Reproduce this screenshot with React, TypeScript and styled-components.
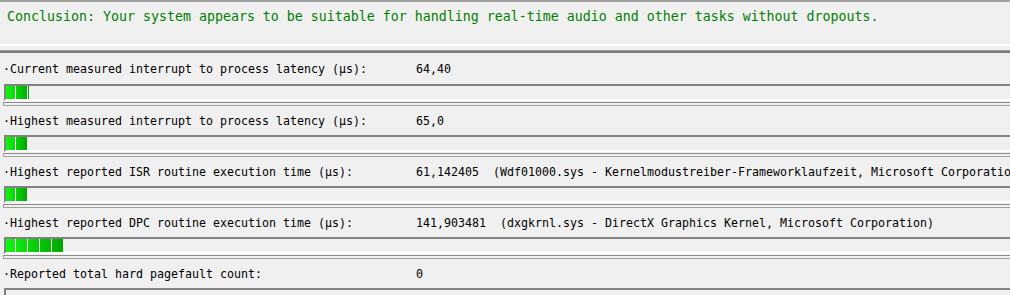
import React from "react";
import styled, { createGlobalStyle } from "styled-components";

const GlobalStyle = createGlobalStyle`
  html, body {
    margin: 0;
    padding: 0;
    background: #f0f0f0;
    overflow: hidden;
  }
  #root {
    width: 1010px;
    height: 295px;
    overflow: hidden;
  }
`;

const Page = styled.div`
  width: 1010px;
  height: 295px;
  overflow: hidden;
  background: #f0f0f0;
  font-family: "DejaVu Sans Mono", "Liberation Mono", monospace;
`;

const Conclusion = styled.div`
  box-sizing: border-box;
  height: 46px;
  border-top: 2px solid #a0a0a0;
  border-bottom: 2px solid #ffffff;
  padding: 7px 7px 0;
  font-size: 13.29px;
  line-height: 16px;
  color: #008000;
  white-space: nowrap;
`;

const Stats = styled.div`
  margin-top: 4px;
`;

const StatsRule = styled.div`
  height: 3px;
  background: linear-gradient(to bottom, #a0a0a0 0 1px, #7c7c7c 1px 3px);
`;

const Item = styled.div`
  display: flex;
  flex-direction: column;
`;

const Separator = styled.div`
  margin: 1px 0 0 3px;
  height: 2px;
  border-top: 1px solid #8c8c8c;
  border-left: 1px solid #a0a0a0;
  border-bottom: 1px solid #a0a0a0;
  background: #f0f0f0;
`;

const Row = styled.div<{ $first?: boolean }>`
  display: flex;
  align-items: center;
  height: ${(p) => (p.$first ? 31 : 29)}px;
  padding-left: 3px;
  font-size: 11.63px;
  color: #000;
  white-space: pre;
`;

const Label = styled.span`
  flex: none;
  width: 413px;
`;

const Value = styled.span`
  flex: none;
`;

const Bar = styled.div`
  box-sizing: border-box;
  margin-left: 4px;
  height: 17px;
  border-top: 2px solid #828282;
  border-left: 2px solid #828282;
  border-bottom: 2px solid #ffffff;
  background: #f0f0f0;
`;

const Fill = styled.div`
  height: 13px;
  background:
    repeating-linear-gradient(
      to right,
      transparent 0 9px,
      #ffffff 9px 10px,
      transparent 10px 12px
    ),
    linear-gradient(to right, #10f810, #00a600);
`;

type Stat = {
  label: string;
  value: string;
  detail?: string;
  fill: number;
};

const stats: Stat[] = [
  {
    label: "·Current measured interrupt to process latency (µs):",
    value: "64,40",
    fill: 23,
  },
  {
    label: "·Highest measured interrupt to process latency (µs):",
    value: "65,0",
    fill: 21,
  },
  {
    label: "·Highest reported ISR routine execution time (µs):",
    value: "61,142405",
    detail:
      "(Wdf01000.sys - Kernelmodustreiber-Frameworklaufzeit, Microsoft Corporation)",
    fill: 21,
  },
  {
    label: "·Highest reported DPC routine execution time (µs):",
    value: "141,903481",
    detail: "(dxgkrnl.sys - DirectX Graphics Kernel, Microsoft Corporation)",
    fill: 57,
  },
  {
    label: "·Reported total hard pagefault count:",
    value: "0",
    fill: 0,
  },
];

export default function App() {
  return (
    <>
      <GlobalStyle />
      <Page>
        <Conclusion>
          Conclusion: Your system appears to be suitable for handling real-time
          audio and other tasks without dropouts.
        </Conclusion>
        <Stats>
          <StatsRule />
          {stats.map((s, i) => (
            <Item key={s.label}>
              {i > 0 && <Separator />}
              <Row $first={i === 0}>
                <Label>{s.label}</Label>
                <Value>
                  {s.value}
                  {s.detail ? "  " + s.detail : ""}
                </Value>
              </Row>
              <Bar>
                {s.fill > 0 && <Fill style={{ width: s.fill }} />}
              </Bar>
            </Item>
          ))}
        </Stats>
      </Page>
    </>
  );
}
